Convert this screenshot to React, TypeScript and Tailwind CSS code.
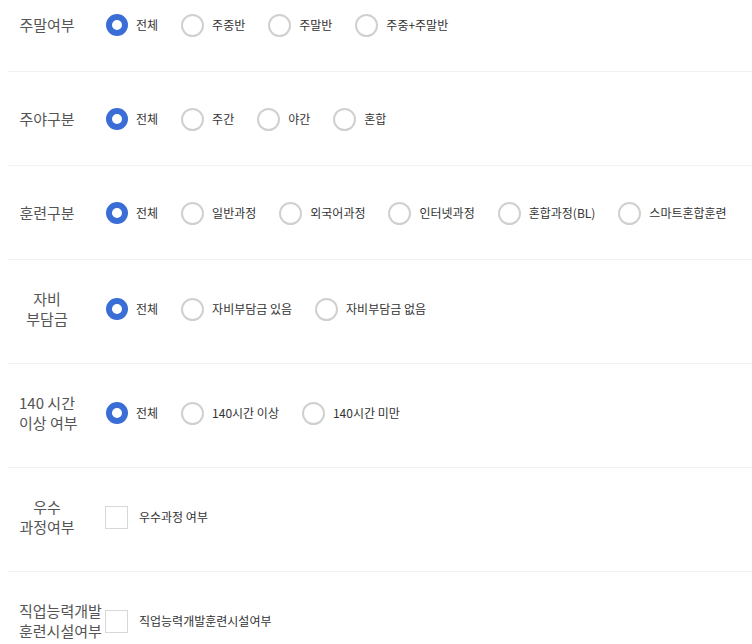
import { useState } from "react";

type Option = { value: string; label: string };

interface FilterRow {
    key: string;
    label: string[];
    type: "radio" | "check";
    options: Option[];
}

const rows: FilterRow[] = [
    {
        key: "weekend",
        label: ["주말여부"],
        type: "radio",
        options: [
            { value: "all", label: "전체" },
            { value: "weekday", label: "주중반" },
            { value: "weekend", label: "주말반" },
            { value: "both", label: "주중+주말반" },
        ],
    },
    {
        key: "dayNight",
        label: ["주야구분"],
        type: "radio",
        options: [
            { value: "all", label: "전체" },
            { value: "day", label: "주간" },
            { value: "night", label: "야간" },
            { value: "mixed", label: "혼합" },
        ],
    },
    {
        key: "training",
        label: ["훈련구분"],
        type: "radio",
        options: [
            { value: "all", label: "전체" },
            { value: "general", label: "일반과정" },
            { value: "foreign", label: "외국어과정" },
            { value: "internet", label: "인터넷과정" },
            { value: "bl", label: "혼합과정(BL)" },
            { value: "smart", label: "스마트혼합훈련" },
        ],
    },
    {
        key: "selfPay",
        label: ["자비", "부담금"],
        type: "radio",
        options: [
            { value: "all", label: "전체" },
            { value: "yes", label: "자비부담금 있음" },
            { value: "no", label: "자비부담금 없음" },
        ],
    },
    {
        key: "hours",
        label: ["140 시간", "이상 여부"],
        type: "radio",
        options: [
            { value: "all", label: "전체" },
            { value: "over", label: "140시간 이상" },
            { value: "under", label: "140시간 미만" },
        ],
    },
    {
        key: "excellent",
        label: ["우수", "과정여부"],
        type: "check",
        options: [{ value: "y", label: "우수과정 여부" }],
    },
    {
        key: "facility",
        label: ["직업능력개발", "훈련시설여부"],
        type: "check",
        options: [{ value: "y", label: "직업능력개발훈련시설여부" }],
    },
];

function Radio({ checked }: { checked: boolean }) {
    return (
        <span className="w-[23px] h-[23px] shrink-0 flex items-center justify-center">
            {checked ? (
                <span className="w-[22px] h-[22px] rounded-full border-[6px] border-[#3b6dd7] bg-white" />
            ) : (
                <span className="w-[23px] h-[23px] rounded-full border-2 border-[#d0d0d0] bg-white" />
            )}
        </span>
    );
}

function Check({ checked }: { checked: boolean }) {
    return (
        <span
            className={`w-[23px] h-[23px] border shrink-0 ${
                checked ? "border-[#3b6dd7] bg-[#3b6dd7]" : "border-[#d8d8d8] bg-white"
            }`}
        />
    );
}

export default function App() {
    const [radios, setRadios] = useState<Record<string, string>>({
        weekend: "all",
        dayNight: "all",
        training: "all",
        selfPay: "all",
        hours: "all",
    });
    const [checks, setChecks] = useState<Record<string, boolean>>({});

    return (
        <div
            className="w-[752px] h-[644px] overflow-hidden bg-white text-[#333]"
            style={{ fontFamily: '"Noto Sans CJK KR", "Noto Sans", sans-serif' }}
        >
            <div className="-mt-[22px]">
                {rows.map((row) => {
                    const tall = row.label.length > 1;
                    return (
                        <div
                            key={row.key}
                            className={`ml-2 flex items-center border-b border-[#f2f2f2] ${
                                tall ? "pt-[29px] pb-[34px]" : "pt-8 pb-[31px]"
                            }`}
                        >
                            <div className="ml-[11px] w-14 shrink-0 text-center text-[15px] leading-5 text-[#555] whitespace-nowrap">
                                {row.label.map((l) => (
                                    <div key={l}>{l}</div>
                                ))}
                            </div>
                            <div className="ml-[30px] min-h-[30px] flex items-center">
                                {row.options.map((opt) => {
                                    if (row.type === "radio") {
                                        const on = radios[row.key] === opt.value;
                                        return (
                                            <label
                                                key={opt.value}
                                                className="flex items-center mr-[23px] cursor-pointer"
                                                onClick={() => setRadios({ ...radios, [row.key]: opt.value })}
                                            >
                                                <Radio checked={on} />
                                                <span className="ml-2 text-[12px] text-[#333] whitespace-nowrap">
                                                    {opt.label}
                                                </span>
                                            </label>
                                        );
                                    }
                                    const on = !!checks[row.key];
                                    return (
                                        <label
                                            key={opt.value}
                                            className="flex items-center cursor-pointer"
                                            onClick={() => setChecks({ ...checks, [row.key]: !on })}
                                        >
                                            <Check checked={on} />
                                            <span className="ml-[11px] text-[12px] text-[#333] whitespace-nowrap">
                                                {opt.label}
                                            </span>
                                        </label>
                                    );
                                })}
                            </div>
                        </div>
                    );
                })}
            </div>
        </div>
    );
}
